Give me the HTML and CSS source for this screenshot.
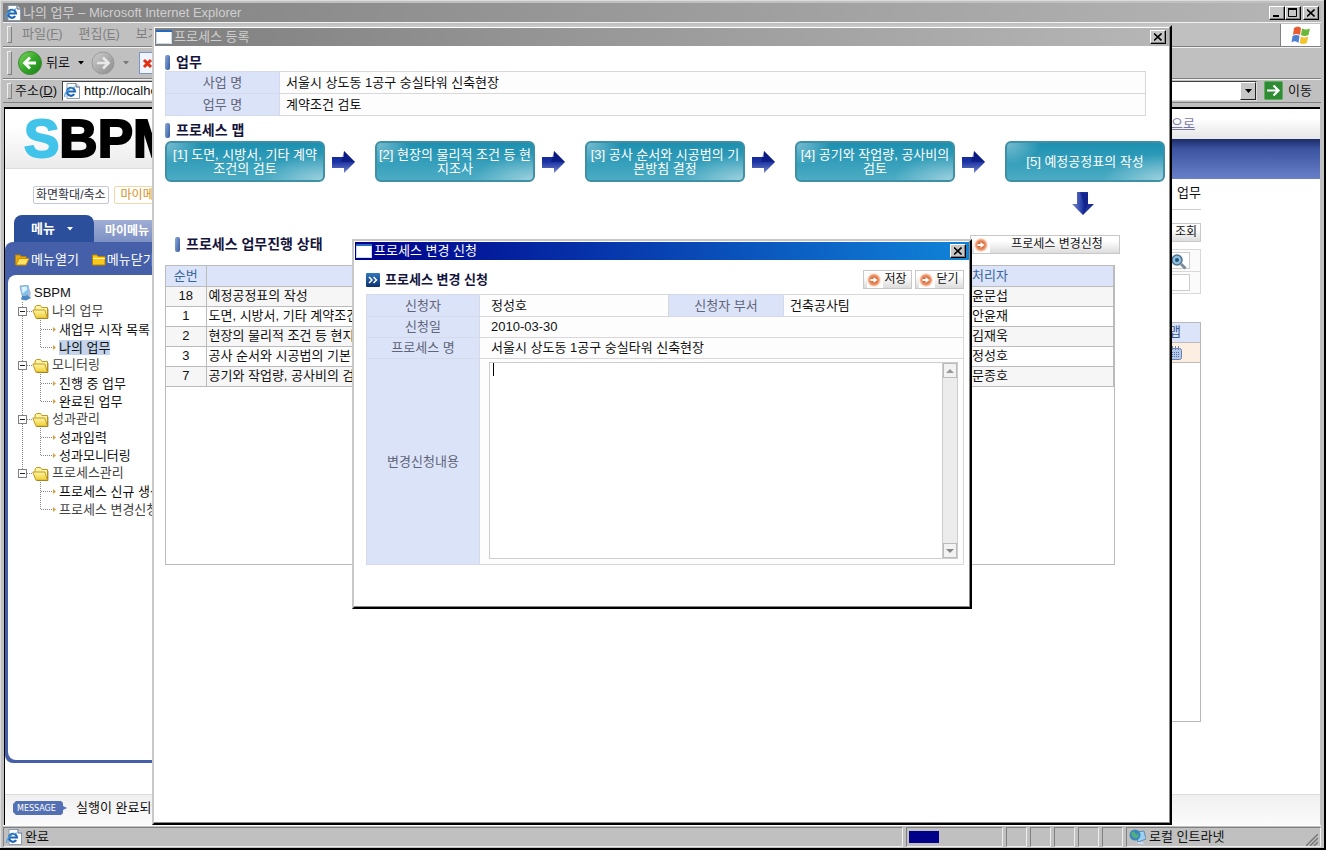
FILE: index.html
```html
<!DOCTYPE html>
<html lang="ko">
<head>
<meta charset="utf-8">
<title>나의 업무 - Microsoft Internet Explorer</title>
<link rel="stylesheet" href="styles.css">
</head>
<body>
<svg class="defs" width="0" height="0" aria-hidden="true">
  <defs>
    <linearGradient id="gGreen" x1="0" y1="0" x2="1" y2="1"><stop offset="0" stop-color="#7fd860"/><stop offset=".5" stop-color="#35a82a"/><stop offset="1" stop-color="#1c7c1c"/></linearGradient>
    <linearGradient id="gGray" x1="0" y1="0" x2="1" y2="1"><stop offset="0" stop-color="#cfcfcf"/><stop offset="1" stop-color="#8a8a8a"/></linearGradient>
    <linearGradient id="gArrow" x1="0" y1="0" x2="0" y2="1"><stop offset="0" stop-color="#0c1c90"/><stop offset=".5" stop-color="#1c34a4"/><stop offset="1" stop-color="#7484c8"/></linearGradient>
    <linearGradient id="gArrowSide" x1="0" y1="0" x2="1" y2="0"><stop offset="0" stop-color="#7c8ccc"/><stop offset=".5" stop-color="#1c34a4"/><stop offset="1" stop-color="#1a2c90"/></linearGradient>
    <linearGradient id="gFolder" x1="0" y1="0" x2="0" y2="1"><stop offset="0" stop-color="#fff6a8"/><stop offset="1" stop-color="#f0cc30"/></linearGradient>
    <radialGradient id="gOrange"><stop offset="0" stop-color="#c04c10"/><stop offset=".6" stop-color="#e07c4c"/><stop offset="1" stop-color="#f4b898"/></radialGradient>
    <linearGradient id="gBlue" x1="0" y1="0" x2="0" y2="1"><stop offset="0" stop-color="#2f78c0"/><stop offset="1" stop-color="#0c3070"/></linearGradient>
  </defs>
  <symbol id="ie" viewBox="0 0 16 16">
    <path d="M3 .5h9l3.500 3.500v11.500H3z" fill="#fff" stroke="#8a98b0"/><path d="M12 .5v3.500h3.500" fill="#dde6f2" stroke="#56657c"/>
    <path d="M10.200 11.200A4 4 0 1 1 11 8.500H3.500" fill="none" stroke="#1f66b4" stroke-width="2.200"/>
    <path d="M1 14c-1.500-3 3-9 10-10" fill="none" stroke="#4fa0dc" stroke-width="1.200"/>
  </symbol>
  <symbol id="win" viewBox="0 0 16 14"><rect width="16" height="14" fill="#fff"/><rect width="16" height="2" fill="#2468c0"/><path d="M.5 2v11.500h15V2" fill="none" stroke="#c8dcf0"/></symbol>
  <symbol id="close" viewBox="0 0 8 8"><path d="M0 .5l7.500 7M7.500 .5L0 7.500" stroke="#000" stroke-width="1.600"/></symbol>
  <symbol id="go" viewBox="0 0 16 16"><rect width="16" height="16" fill="#fff"/><circle cx="7" cy="8" r="7" fill="#fbe0d0"/><circle cx="7" cy="8" r="6" fill="url(#gOrange)"/><path d="M3.500 7h3V5l4 3-4 3V9h-3z" fill="#fff"/></symbol>
  <symbol id="right" viewBox="0 0 24 24"><path d="M0 7h12V1l11 11-11 11v-5H0z" fill="url(#gArrow)"/><path d="M12 1l11 11H9z" fill="#061070" opacity=".55"/></symbol>
  <symbol id="down" viewBox="0 0 24 24"><path d="M6 0h11v12h6L12 23 1 12h5z" fill="url(#gArrowSide)"/><path d="M9 0l4 12-1 11L17 12V2z" fill="#081478" opacity=".5"/></symbol>
  <symbol id="folder" viewBox="0 0 17 14"><path d="M3 10V2l1.500-1.500h4L10 2.500h5.500V12" fill="#fff2a0" stroke="#c09a20"/><path d="M.8 5h12l2.700 8.300H4z" fill="url(#gFolder)" stroke="#c09a20"/><path d="M16 4v9.500H5" fill="none" stroke="#8c7420" opacity=".7"/></symbol>
  <symbol id="yfolder" viewBox="0 0 14 12"><path d="M.5 11V1h4.500l1 1.500h7V11z" fill="#f8c81c" stroke="#b88400"/><path d="M1 4.500h12" stroke="#fff2a0"/></symbol>
  <symbol id="ofolder" viewBox="0 0 15 12"><path d="M.5 11V1h4.500l1 1.500h5V5" fill="#e8a810" stroke="#b88400"/><path d="M1 11l3-6.500h10L11 11z" fill="#ffe060" stroke="#c88c00"/></symbol>
  <symbol id="pc" viewBox="0 0 14 16"><path d="M2 1l8-.8 2 8.800-8 1.500z" fill="#7cc4f0" stroke="#9ab0cc"/><path d="M3.500 2l5-.5 1 3-5 4z" fill="#d8f2ff"/><path d="M4 11l6-1 3 3-5 2.500-5-1z" fill="#4c88c4"/><path d="M10 5l2.500 1v6L10 11z" fill="#a8bcd8"/></symbol>
  <symbol id="node" viewBox="0 0 34 18"><path d="M4.500 0v18M9 9.500h5" stroke="#888" stroke-dasharray="1 1"/><rect x=".5" y="5.500" width="8" height="8" fill="#fff" stroke="#808080"/><path d="M2 9.500h5" stroke="#222"/><use href="#folder" x="14" y="3" width="17" height="14"/></symbol>
  <symbol id="node-end" viewBox="0 0 34 18"><path d="M4.500 0v6M9 9.500h5" stroke="#888" stroke-dasharray="1 1"/><rect x=".5" y="5.500" width="8" height="8" fill="#fff" stroke="#808080"/><path d="M2 9.500h5" stroke="#222"/><use href="#folder" x="14" y="3" width="17" height="14"/></symbol>
  <symbol id="trunk" viewBox="0 0 41 18"><path d="M4.500 0v18" stroke="#888" stroke-dasharray="1 1"/></symbol>
  <symbol id="leaf" viewBox="0 0 41 18"><path d="M22.500 0v18M23 9.500h12" stroke="#888" stroke-dasharray="1 1"/><path d="M35 7l3 2.500-3 2.500z" fill="#d8a040"/></symbol>
  <symbol id="leaf-end" viewBox="0 0 41 18"><path d="M22.500 0v10M23 9.500h12" stroke="#888" stroke-dasharray="1 1"/><path d="M35 7l3 2.500-3 2.500z" fill="#d8a040"/></symbol>
</svg>

<div class="browser">
  <header class="titlebar">
    <svg width="16" height="16"><use href="#ie"/></svg>
    <span class="title">나의 업무 – Microsoft Internet Explorer</span>
    <button class="winbtn" aria-label="최소화"><svg width="8" height="8"><path d="M0 7h6" stroke="#000" stroke-width="2"/></svg></button>
    <button class="winbtn" aria-label="최대화"><svg width="10" height="9"><path d="M.5 1v7.500h8V1M0 1h9" fill="none" stroke="#000"/><path d="M0 1h9" stroke="#000" stroke-width="2"/></svg></button>
    <button class="winbtn last" aria-label="닫기"><svg width="8" height="8"><use href="#close"/></svg></button>
  </header>

  <nav class="bar menubar">
    <button class="menuitem">파일(<u>F</u>)</button><button class="menuitem">편집(<u>E</u>)</button><button class="menuitem">보기</button>
    <span class="flag"><svg width="22" height="20" viewBox="0 0 22 20"><path d="M4 3q4-3 7 0l-1 7q-4-2-7 0z" fill="#e85c30"/><path d="M12 3.500q4 2 8 0l-1.500 6.500q-4 2-7.500 0z" fill="#6cb83c"/><path d="M2.500 11q4-2 7 0l-1 7q-3-3-7-.5z" fill="#4c80d0"/><path d="M10.800 11.500q3.500 2 7.500 0l-1.500 6.500q-4 2-7 0z" fill="#f4c430"/></svg></span>
  </nav>

  <div class="bar toolbar">
    <button class="tool"><svg width="24" height="24"><circle cx="12" cy="12" r="11.500" fill="url(#gGreen)" stroke="#3c8c30"/><path d="M18 12H7M12 6.500L6.500 12l5.500 5.500" fill="none" stroke="#fff" stroke-width="2.800"/></svg>뒤로</button>
    <svg class="caret-down" width="7" height="4"><path d="M0 0h6L3 3.500z"/></svg>
    <button class="tool" aria-label="앞으로"><svg width="24" height="24"><circle cx="12" cy="12" r="11" fill="url(#gGray)" stroke="#999"/><path d="M6 12h11M12 6.500l5.500 5.500-5.500 5.500" fill="none" stroke="#e8e8e8" stroke-width="2.600"/></svg></button>
    <svg class="caret-down" width="7" height="4"><path d="M0 0h6L3 3.500z" fill="#777"/></svg>
    <button class="tool stop" aria-label="중지"><svg width="18" height="22"><rect x=".5" y=".5" width="17" height="21" fill="#f0f4ff" stroke="#7c94c8"/><path d="M5 8l7 7M12 8l-7 7" stroke="#e03010" stroke-width="3"/></svg></button>
  </div>

  <form class="bar address" onsubmit="return false">
    <label for="url">주소(<u>D</u>)</label>
    <div class="field">
      <svg width="16" height="16"><use href="#ie"/></svg>
      <input id="url" type="text" value="http://localhost:8080">
      <button class="drop" type="button" aria-label="목록"><svg width="7" height="4"><path d="M0 0h7L3.500 4z"/></svg></button>
    </div>
    <button class="gobtn" type="button"><svg width="19" height="19"><rect x=".5" y=".5" width="18" height="18" rx="1" fill="#2f8c34" stroke="#5cb05c"/><path d="M3 9.500h11M9.500 4.500l5 5-5 5" fill="none" stroke="#fff" stroke-width="2.200"/></svg>이동</button>
  </form>

  <div class="page">
    <div class="body">
      <aside class="sidebar">
        <div class="logo"><span>S</span>BPM</div>
        <div class="links"><button class="chip">화면확대/축소</button><button class="chip amber">마이메뉴</button></div>
        <div class="tabs"><button class="tab on">메뉴<svg width="7" height="4"><path d="M0 0h6L3 3.500z" fill="#fff"/></svg></button><button class="tab">마이메뉴</button></div>
        <div class="panel">
          <div class="actions">
            <button><svg width="15" height="12"><use href="#ofolder"/></svg>메뉴열기</button>
            <button><svg width="14" height="12"><use href="#yfolder"/></svg>메뉴닫기</button>
          </div>
          <ul class="tree">
            <li class="root"><svg width="14" height="16"><use href="#pc"/></svg>SBPM</li>
            <li><svg width="34" height="18"><use href="#node"/></svg>나의 업무</li>
            <li><svg width="41" height="18"><use href="#trunk"/><use href="#leaf"/></svg><a href="#">새업무 시작 목록</a></li>
            <li><svg width="41" height="18"><use href="#trunk"/><use href="#leaf-end"/></svg><a href="#" class="sel">나의 업무</a></li>
            <li><svg width="34" height="18"><use href="#node"/></svg>모니터링</li>
            <li><svg width="41" height="18"><use href="#trunk"/><use href="#leaf"/></svg><a href="#">진행 중 업무</a></li>
            <li><svg width="41" height="18"><use href="#trunk"/><use href="#leaf-end"/></svg><a href="#">완료된 업무</a></li>
            <li><svg width="34" height="18"><use href="#node"/></svg>성과관리</li>
            <li><svg width="41" height="18"><use href="#trunk"/><use href="#leaf"/></svg><a href="#">성과입력</a></li>
            <li><svg width="41" height="18"><use href="#trunk"/><use href="#leaf-end"/></svg><a href="#">성과모니터링</a></li>
            <li><svg width="34" height="18"><use href="#node-end"/></svg>프로세스관리</li>
            <li><svg width="41" height="18"><use href="#leaf"/></svg><a href="#">프로세스 신규 생성</a></li>
            <li><svg width="41" height="18"><use href="#leaf-end"/></svg><a href="#" class="dim">프로세스 변경신청</a></li>
          </ul>
        </div>
      </aside>
      <main class="work">
        <div class="tophead"><a href="#">처음으로</a></div>
        <div class="band"></div>
        <div class="workbody">
          <h1>나의 업무</h1>
          <div class="query"><button class="btn small">조회</button></div>
          <div class="criteria">
            <div class="crit"><input type="text" aria-label="검색 조건"><svg class="lens" width="16" height="16"><circle cx="6" cy="6" r="5" fill="#8cc0e0" stroke="#507088" stroke-width="1.500"/><circle cx="6" cy="6" r="2" fill="#2c5878"/><path d="M10 10l4.500 4.500" stroke="#7c8c98" stroke-width="3"/></svg></div>
            <div class="crit"><input type="text" aria-label="검색어"></div>
          </div>
          <div class="grid">
            <div class="gridhead">맵</div>
            <div class="gridrow"><svg width="14" height="14"><rect x=".5" y="2.500" width="12" height="11" rx="2" fill="#b4c8ec" stroke="#6c84ac"/><path d="M3.500 0v4M6.500 0v4M9.500 0v4" stroke="#6c84ac"/><path d="M3 6.500h8M3 8.500h8M3 10.500h8" stroke="#5070a8" stroke-dasharray="1 1"/></svg></div>
          </div>
        </div>
      </main>
    </div>
    <footer class="message">
      <svg width="54" height="14"><path d="M3 0h45l2 2v3l4 2-4 2v3l-2 2H3l-3-3V3z" fill="#5470b4"/><text x="4" y="10" class="msgtag">MESSAGE</text></svg>
      <span>실행이 완료되었습니다</span>
    </footer>
  </div>

  <footer class="status">
    <div class="cell grow"><svg width="16" height="16"><use href="#ie"/></svg>완료</div>
    <div class="cell prog"><i></i></div>
    <div class="cell tiny"></div><div class="cell tiny"></div><div class="cell tiny"></div><div class="cell tiny"></div><div class="cell tiny"></div>
    <div class="cell zone"><svg width="17" height="16"><path d="M6 3l9-1 2 8-8 3z" fill="#9cd0f4" stroke="#6888a8"/><circle cx="6" cy="6" r="5.500" fill="#3c88b8"/><path d="M2 4q3-3 4 0t4 1q-1 5-4 4T2 4z" fill="#54b080"/><path d="M8 13h6l1 2H9z" fill="#c8d8f0"/></svg><span>로컬 인트라넷</span><svg class="grip" width="12" height="12"><path d="M0 12L12 0M4 12l8-8M8 12l4-4" stroke="#777" stroke-width="1.500"/></svg></div>
  </footer>
</div>

<section class="window process">
  <header class="titlebar inactive"><svg width="16" height="14"><use href="#win"/></svg><span class="title">프로세스 등록</span><button class="winbtn last" aria-label="닫기"><svg width="8" height="8"><use href="#close"/></svg></button></header>
  <div class="content">
    <h2 class="mark">업무</h2>
    <table class="info">
      <tr><th scope="row">사업 명</th><td>서울시 상도동 1공구 숭실타워 신축현장</td></tr>
      <tr><th scope="row">업무 명</th><td>계약조건 검토</td></tr>
    </table>
    <h2 class="mark map">프로세스 맵</h2>
    <div class="flow">
      <button class="step">[1] 도면, 시방서, 기타 계약<br>조건의 검토</button>
      <svg width="24" height="24"><use href="#right"/></svg>
      <button class="step">[2] 현장의 물리적 조건 등 현<br>지조사</button>
      <svg width="24" height="24"><use href="#right"/></svg>
      <button class="step">[3] 공사 순서와 시공법의 기<br>본방침 결정</button>
      <svg width="24" height="24"><use href="#right"/></svg>
      <button class="step">[4] 공기와 작업량, 공사비의<br>검토</button>
      <svg width="24" height="24"><use href="#right"/></svg>
      <button class="step">[5] 예정공정표의 작성</button>
    </div>
    <div class="next"><svg width="24" height="24"><use href="#down"/></svg></div>
    <div class="statehead">
      <h2 class="mark">프로세스 업무진행 상태</h2>
      <button class="btn wide"><svg width="16" height="16"><use href="#go"/></svg><span>프로세스 변경신청</span></button>
    </div>
    <div class="listbox">
      <table class="list">
        <thead><tr><th class="num">순번</th><th></th><th class="who">처리자</th></tr></thead>
        <tbody>
          <tr><td class="num">18</td><td>예정공정표의 작성</td><td class="who">윤문섭</td></tr>
          <tr><td class="num">1</td><td>도면, 시방서, 기타 계약조건의 검토</td><td class="who">안윤재</td></tr>
          <tr><td class="num">2</td><td>현장의 물리적 조건 등 현지조사</td><td class="who">김재욱</td></tr>
          <tr><td class="num">3</td><td>공사 순서와 시공법의 기본방침 결정</td><td class="who">정성호</td></tr>
          <tr><td class="num">7</td><td>공기와 작업량, 공사비의 검토</td><td class="who">문종호</td></tr>
        </tbody>
      </table>
    </div>
  </div>
</section>

<section class="window request">
  <header class="titlebar active"><svg width="16" height="14"><use href="#win"/></svg><span class="title">프로세스 변경 신청</span><button class="winbtn last" aria-label="닫기"><svg width="8" height="8"><use href="#close"/></svg></button></header>
  <form class="reqform" onsubmit="return false">
    <div class="reqhead">
      <svg width="14" height="14"><rect width="14" height="14" rx="1" fill="url(#gBlue)"/><path d="M3 4l3 3-3 3M7.500 4l3 3-3 3" fill="none" stroke="#fff" stroke-width="1.500"/></svg>
      <h2>프로세스 변경 신청</h2>
      <button class="btn" type="button"><svg width="16" height="16"><use href="#go"/></svg><span>저장</span></button>
      <button class="btn" type="button"><svg width="16" height="16"><use href="#go"/></svg><span>닫기</span></button>
    </div>
    <table class="info detail">
      <tr><th scope="row">신청자</th><td>정성호</td><th scope="row" class="second">신청자 부서</th><td class="dept">건축공사팀</td></tr>
      <tr class="short"><th scope="row">신청일</th><td colspan="3">2010-03-30</td></tr>
      <tr class="short"><th scope="row">프로세스 명</th><td colspan="3">서울시 상도동 1공구 숭실타워 신축현장</td></tr>
      <tr><th scope="row"><label for="body">변경신청내용</label></th><td colspan="3" class="editcell">
        <div class="editor"><textarea id="body"></textarea><span class="cursor"></span>
          <div class="scroll"><button type="button" aria-label="위로"><svg width="8" height="4"><path d="M0 4h8L4 0z" fill="#999"/></svg></button><button type="button" aria-label="아래로"><svg width="8" height="4"><path d="M0 0h8L4 4z" fill="#888"/></svg></button></div>
        </div></td></tr>
    </table>
  </form>
</section>
</body>
</html>
```

FILE: styles.css
```css
* { box-sizing: border-box; }
html, body { height: 100%; }
body {
  margin: 0;
  overflow: hidden;
  background: #c0c0c0;
  color: #111;
  font: 13px/18px "Liberation Sans", "Noto Sans CJK KR", sans-serif;
}
button, input, textarea { font: inherit; color: inherit; margin: 0; padding: 0; }
button { border: 0; background: none; white-space: nowrap; }
svg { display: block; flex: none; }
h1, h2, ul { margin: 0; padding: 0; }
ul { list-style: none; }
table { border-collapse: collapse; }
.defs { position: absolute; }

/* Browser frame */
.browser {
  display: flex;
  flex-direction: column;
  height: 100vh;
  padding: 3px 3px 1px 3px;
  background: #c0c0c0;
  border-right: 2px solid #000;
  border-bottom: 2px solid #000;
  box-shadow: inset 1px 1px #dcdcdc;
}
.titlebar {
  display: flex;
  align-items: center;
  height: 19px;
  flex: none;
  padding: 0 2px;
  background: linear-gradient(90deg, #808080, #b6b6b6);
  color: #cfcfcf;
}
.title { flex: 1; padding-left: 2px; line-height: 16px; white-space: nowrap; }
.winbtn {
  display: flex;
  align-items: center;
  justify-content: center;
  width: 16px;
  height: 14px;
  background: #c6c6c6;
  border: 1px solid;
  border-color: #fff #000 #000 #fff;
  box-shadow: inset -1px -1px #808080;
}
.winbtn.last { margin-left: 2px; }
.bar {
  display: flex;
  align-items: center;
  flex: none;
  border-bottom: 1px solid #808080;
  box-shadow: inset 0 1px #f2f2f2;
}
.bar::before {
  content: "";
  align-self: stretch;
  width: 3px;
  margin: 4px 0 3px 4px;
  border: 1px solid;
  border-color: #eee #808080 #808080 #eee;
}
.menubar { height: 25px; color: #808080; }
.menuitem { margin-left: 10px; }
.menuitem + .menuitem { margin-left: 16px; }
.flag {
  display: flex;
  align-items: center;
  justify-content: center;
  align-self: stretch;
  width: 40px;
  margin: 2px 1px 0 auto;
  background: #fff;
  border-left: 1px solid #808080;
}
.toolbar { height: 32px; }
.tool { display: flex; align-items: center; gap: 4px; margin-left: 6px; }
.tool.stop { margin-left: 9px; }
.caret-down { margin-left: 8px; }
.address { height: 24px; }
.address label { margin-left: 3px; }
.field {
  display: flex;
  align-items: center;
  flex: 1;
  height: 20px;
  margin-left: 5px;
  padding-left: 1px;
  background: #fff;
  border: 1px solid #555;
  border-color: #404040 #ddd #ddd #404040;
}
.field input { flex: 1; min-width: 0; border: 0; outline: 0; padding-left: 4px; background: none; }
.drop {
  display: flex;
  align-items: center;
  justify-content: center;
  width: 16px;
  height: 18px;
  background: #c6c6c6;
  border: 1px solid;
  border-color: #fff #222 #222 #fff;
}
.gobtn { display: flex; align-items: center; gap: 5px; margin: 0 9px 0 7px; }

/* Page in the browser */
.page {
  display: flex;
  flex-direction: column;
  flex: 1;
  min-height: 0;
  margin: 4px 1px 0;
  background: #fff;
  border: solid #000;
  border-width: 2px 0 0 1px;
}
.body { display: flex; flex: 1; min-height: 0; }
.sidebar { display: flex; flex-direction: column; width: 190px; padding-bottom: 31px; }
.logo {
  height: 60px;
  padding-left: 19px;
  font: bold 53px/60px "Liberation Sans", sans-serif;
  color: #000;
  -webkit-text-stroke: 2px currentColor;
  background: linear-gradient(#fff 30%, #ebebeb);
  border-bottom: 1px solid #ddd;
}
.logo span { color: #42c4ea; }
.links { display: flex; gap: 5px; margin: 17px 0 0 28px; }
.chip {
  height: 18px;
  padding: 0 2px;
  font-size: 12px;
  line-height: 16px;
  color: #334;
  border: 1px solid #c4c8da;
  border-radius: 2px;
}
.chip.amber { padding: 0 6px; color: #d89020; border-color: #f0d8a8; }
.tabs { display: flex; align-items: flex-end; margin: 11px 0 0 9px; }
.tab {
  height: 22px;
  padding: 0 11px;
  background: linear-gradient(#a0aed4, #7c90c4);
  color: #fff;
  font-size: 12px;
  font-weight: bold;
}
.tab.on {
  display: flex;
  align-items: center;
  gap: 12px;
  height: 27px;
  width: 80px;
  padding: 0 0 0 17px;
  background: #2c4f9c;
  border-radius: 8px 8px 0 0;
  font-size: 13px;
}
.panel {
  display: flex;
  flex-direction: column;
  flex: 1;
  min-height: 0;
  padding: 0 0 3px 3px;
  background: #4560a8;
  border-radius: 8px 0 0 8px;
}
.actions { display: flex; gap: 13px; height: 33px; padding: 3px 0 0 7px; color: #fff; }
.actions button { display: flex; align-items: center; gap: 1px; }
.tree { flex: 1; padding: 9px 0 0 10px; background: #fff; border-radius: 8px 0 0 8px; }
.tree li { display: flex; align-items: center; height: 18px; color: #444; white-space: nowrap; }
.tree li.root { gap: 2px; color: #111; }
.tree a { color: #111; text-decoration: none; line-height: 15px; }
.tree a.dim { color: #444; }
.tree a.sel { background: #c4d4ec; }
.work { flex: 1; min-width: 0; }
.tophead {
  display: flex;
  justify-content: flex-end;
  align-items: center;
  height: 30px;
  padding-right: 125px;
  background: linear-gradient(#fff 30%, #e6e6e6);
}
.tophead a { color: #7878a8; }
.band { height: 40px; background: linear-gradient(#1c2c68, #3c54a0 25%, #6880c8); }
.workbody { padding-right: 119px; }
h1 {
  height: 31px;
  border-bottom: 1px solid #ccc;
  font-size: 13px;
  line-height: 28px;
  font-weight: normal;
  text-align: right;
}
.query { display: flex; justify-content: flex-end; padding: 13px 0 7px; }
.btn {
  display: flex;
  align-items: center;
  height: 19px;
  padding: 0 3px;
  background: linear-gradient(#fff 30%, #dcdcdc);
  border: 1px solid #c8c8c8;
  font-size: 12px;
  line-height: 17px;
}
.btn span { flex: 1; text-align: center; }
.criteria { border: 1px solid #d8d8d8; }
.crit { display: flex; justify-content: flex-end; position: relative; padding: 2px 10px 2px 0; background: #fbfbfb; }
.crit + .crit { border-top: 1px solid #d8d8d8; }
.crit input { width: 120px; height: 17px; border: 1px solid #ccc; background: #fff; }
.lens { position: absolute; right: 13px; top: 4px; }
.grid { height: 400px; margin-top: 28px; border: 1px solid #b8b8b8; }
.gridhead { height: 20px; padding-right: 19px; text-align: right; color: #3a5a90; background: #dbe4f8; border-bottom: 1px solid #bbb; }
.gridrow { display: flex; justify-content: flex-end; align-items: center; height: 20px; padding-right: 17px; background: #fdeee2; border-bottom: 1px solid #bbb; }
.message {
  display: flex;
  align-items: center;
  gap: 9px;
  height: 31px;
  padding: 0 0 4px 8px;
  background: linear-gradient(#f0f0f0, #fbfbfb);
  border-top: 1px solid #ddd;
}
.msgtag { fill: #fff; font: 8px "DejaVu Sans", sans-serif; }

.status { display: flex; gap: 3px; height: 22px; flex: none; padding-top: 2px; box-shadow: inset 0 1px #fff; }
.cell {
  display: flex;
  align-items: center;
  gap: 3px;
  padding: 0 2px;
  border: 1px solid;
  border-color: #808080 #eee #eee #808080;
}
.cell.grow { flex: 1; }
.cell.prog { width: 97px; }
.cell.prog i { width: 30px; height: 12px; background: #000088; }
.cell.tiny { width: 21px; }
.cell.zone { width: 195px; }
.grip { margin-left: auto; align-self: flex-end; }

/* Floating windows */
.window {
  position: absolute;
  padding: 1px;
  background: #fff;
  border: solid;
  border-width: 2px;
  border-color: #c8c8c8 #000 #000 #c8c8c8;
  box-shadow: inset -1px -1px #888;
}
.window .titlebar { height: 18px; padding: 0 3px 0 1px; }
.process { left: 152px; top: 25px; right: 154px; bottom: 25px; }
.process .content { padding: 7px 4px 0 10px; }
.mark {
  display: flex;
  align-items: center;
  gap: 6px;
  height: 18px;
  font-size: 14px;
  line-height: 18px;
  color: #14143c;
}
.mark::before {
  content: "";
  width: 5px;
  height: 15px;
  border-radius: 2px;
  background: linear-gradient(100deg, #8cacdc, #3458a0);
}
.mark.map { margin-top: 5px; }
.info th {
  padding: 0;
  background: #dbe3f8;
  border: 1px solid #d4daec;
  color: #606478;
  font-weight: normal;
}
.info td { padding: 0 6px; background: #fdfdfd; border: 1px solid #d8d8d8; }
.process .info { width: calc(100% - 19px); }
.process .info th { width: 114px; }
.info tr { height: 22px; }
.info tr.short { height: 21px; }
.flow { display: flex; align-items: center; justify-content: space-between; margin-top: 2px; }
.flow svg { margin-right: 12px; }
.step {
  width: 160px;
  height: 41px;
  color: #fff;
  line-height: 14px;
  border: 2px solid #3f90a4;
  border-radius: 6px;
  background:
    radial-gradient(ellipse 60px 26px at 100% 100%, rgba(255,255,255,.45), transparent),
    radial-gradient(ellipse 34px 22px at 0 0, rgba(255,255,255,.4), transparent),
    linear-gradient(#1c90b0, #4cacc4);
}
.next { display: flex; justify-content: flex-end; padding: 10px 70px 0 0; }
.statehead { display: flex; align-items: flex-start; justify-content: space-between; margin: 19px 45px 0 10px; }
.btn.wide { width: 150px; }
.btn.wide span { padding-left: 8px; }
.listbox { min-height: 300px; margin: 11px 50px 0 0; border: 1px solid #bbb; }
.list { width: 100%; table-layout: fixed; }
.list tr { height: 20px; }
.list th, .list td { padding: 0 2px; border: 1px solid #bbb; border-width: 0 1px 1px 0; line-height: 18px; white-space: nowrap; }
.list th { background: #dbe4f8; color: #3a64a0; font-weight: normal; }
.list .num { width: 40px; text-align: center; }
.list .who { width: 144px; text-align: left; }
.list tbody tr:nth-child(odd) { background: #f6f6f6; }

.request { left: 352px; top: 239px; width: 620px; }
.titlebar.active { background: linear-gradient(90deg, #00008c, #1084d8); color: #fff; }
.reqform { padding: 8px 5px 41px 11px; }
.reqhead { display: flex; align-items: center; gap: 3px; padding: 2px 0 5px; }
.reqhead h2 { flex: 1; padding-left: 2px; font-size: 13px; line-height: 18px; color: #14143c; }
.reqhead .btn { width: 49px; }
.detail { width: 100%; }
.detail th { width: 113px; }
.detail th.second { width: 115px; }
.detail td { padding-left: 11px; }
.detail td.dept { width: 180px; padding-left: 6px; }
.detail .editcell { padding: 3px 5px 5px 9px; }
.editor { position: relative; display: flex; height: 197px; border: 1px solid #ccc; background: #fff; }
.editor textarea { flex: 1; border: 0; outline: 0; resize: none; background: none; padding: 0 4px; }
.cursor { position: absolute; left: 3px; top: 0; width: 1px; height: 13px; background: #000; }
.scroll { display: flex; flex-direction: column; justify-content: space-between; width: 15px; background: #ececec; border-left: 1px solid #ccc; }
.scroll button {
  display: flex;
  align-items: center;
  justify-content: center;
  height: 15px;
  background: #f2f2f2;
  border: 1px solid #bbb;
}
```
